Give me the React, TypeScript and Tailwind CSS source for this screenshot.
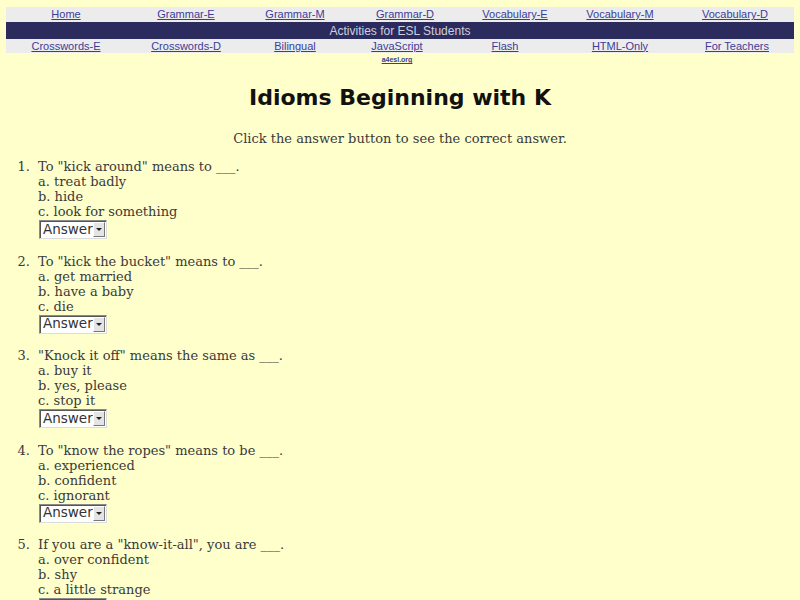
import React from "react";

const row1 = [
  ["Home", 120],
  ["Grammar-E", 120],
  ["Grammar-M", 98],
  ["Grammar-D", 122],
  ["Vocabulary-E", 98],
  ["Vocabulary-M", 112],
  ["Vocabulary-D", 118],
] as const;

const row3 = [
  ["Crosswords-E", 120],
  ["Crosswords-D", 120],
  ["Bilingual", 98],
  ["JavaScript", 106],
  ["Flash", 110],
  ["HTML-Only", 120],
  ["For Teachers", 114],
] as const;

const questions = [
  { q: 'To "kick around" means to ___.', a: ["treat badly", "hide", "look for something"] },
  { q: 'To "kick the bucket" means to ___.', a: ["get married", "have a baby", "die"] },
  { q: '"Knock it off" means the same as ___.', a: ["buy it", "yes, please", "stop it"] },
  { q: 'To "know the ropes" means to be ___.', a: ["experienced", "confident", "ignorant"] },
  { q: 'If you are a "know-it-all", you are ___.', a: ["over confident", "shy", "a little strange"] },
];

function FakeSelect() {
  return (
    <div className="flex items-center w-[68px] h-[19px] bg-white border border-[#8a8a8a] border-r-[#dcdcdc] border-b-[#dcdcdc] shadow-[inset_1px_1px_0_#555]">
      <span className="pl-[3px] text-[13.5px] leading-none text-[#333] font-['DejaVu_Sans',sans-serif] flex-1">Answer</span>
      <span className="w-[13px] h-[15px] mr-[1px] bg-[#e4e4e4] border border-[#fff] border-r-[#777] border-b-[#777] flex items-center justify-center">
        <span className="block w-0 h-0 border-l-[3px] border-r-[3px] border-t-[3px] border-l-transparent border-r-transparent border-t-[#222]" />
      </span>
    </div>
  );
}

export default function App() {
  return (
    <div className="h-[600px] bg-[#ffffcc] pt-[7px] px-[6px] overflow-hidden">
      <div className="font-['Liberation_Sans',Arial,sans-serif] text-[11px]">
        <div className="flex bg-[#ececec] h-[15px] items-center">
          {row1.map(([t, w]) => (
            <div key={t} style={{ width: w }} className="text-center">
              <a className="text-[#3c3c99] underline">{t}</a>
            </div>
          ))}
        </div>
        <div className="bg-[#2b2b5e] h-[17px] flex items-center justify-center text-[#cfcfdf] text-[12px]">
          Activities for ESL Students
        </div>
        <div className="flex bg-[#ececec] h-[14px] items-center">
          {row3.map(([t, w]) => (
            <div key={t} style={{ width: w }} className="text-center">
              <a className="text-[#3c3c99] underline">{t}</a>
            </div>
          ))}
        </div>
        <div className="flex">
          <div className="w-[338px]" />
          <div className="w-[106px] text-center leading-[10px]">
            <a className="text-[#3c3c99] underline text-[7px] font-bold">a4esl.org</a>
          </div>
        </div>
      </div>

      <h1 className="text-center font-['DejaVu_Sans',sans-serif] font-bold text-[22px] text-[#111] mt-[19px] leading-[28px]">
        Idioms Beginning with K
      </h1>
      <p className="text-center font-['DejaVu_Serif',serif] text-[13px] text-[#3a3a3a] mt-[19px] leading-[15px]">
        Click the answer button to see the correct answer.
      </p>

      <ol className="mt-[13px] font-['DejaVu_Serif',serif] text-[13px] text-[#3a3a3a] leading-[15px]">
        {questions.map((item, i) => (
          <li key={i} className="flex mb-[14.5px]">
            <span className="w-[32px] text-right pr-[8px] shrink-0">{i + 1}.</span>
            <div>
              <div>{item.q}</div>
              {item.a.map((x, j) => (
                <div key={j}>
                  {"abc"[j]}. {x}
                </div>
              ))}
              <div className="mt-[1px] ml-[1px]">
                <FakeSelect />
              </div>
            </div>
          </li>
        ))}
      </ol>
    </div>
  );
}
